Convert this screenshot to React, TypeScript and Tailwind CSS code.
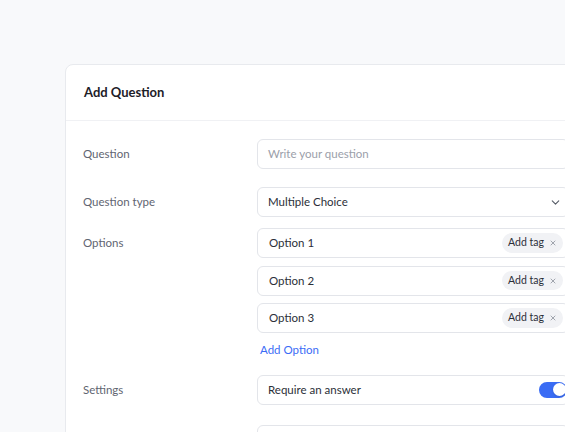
import { ChevronDown, X } from "lucide-react";

const font = { fontFamily: "Lato, 'Noto Sans', sans-serif" };

function OptionRow({ label }: { label: string }) {
  return (
    <div className="flex h-[30px] items-center justify-between rounded-md border border-[#e3e5ea] bg-white pl-[11px] pr-[5px]">
      <span className="text-[11.5px] text-[#2b2f38]">{label}</span>
      <span className="flex items-center gap-[5px] rounded-full bg-[#f1f2f5] px-[6px] py-[2px] text-[10.5px] text-[#2b2f38]">
        Add tag
        <X className="h-[8px] w-[8px] text-[#8b909a]" strokeWidth={2.4} />
      </span>
    </div>
  );
}

export default function App() {
  return (
    <div
      className="h-[432px] w-[565px] overflow-hidden bg-[#f8f9fb] pl-[65px] pt-[64px]"
      style={font}
    >
      <div className="w-[530px] rounded-lg border border-[#e8eaee] bg-white">
        <div className="flex h-[56px] items-center border-b border-[#f0f1f4] px-[18px]">
          <h2 className="text-[13px] font-bold text-[#1d2027]">Add Question</h2>
        </div>

        <div className="flex flex-col px-[17px] pt-[18px]">
          {/* Question */}
          <div className="flex items-center">
            <div className="w-[174px] text-[11.5px] text-[#5f6571]">Question</div>
            <div className="flex h-[30px] w-[312px] items-center rounded-md border border-[#e3e5ea] px-[10px] text-[11.5px] text-[#9ba0aa]">
              Write your question
            </div>
          </div>

          {/* Question type */}
          <div className="mt-[18px] flex items-center">
            <div className="w-[174px] text-[11.5px] text-[#5f6571]">Question type</div>
            <div className="flex h-[30px] w-[312px] items-center justify-between rounded-md border border-[#e3e5ea] pl-[10px] pr-[6px] text-[11.5px] text-[#2b2f38]">
              Multiple Choice
              <ChevronDown className="h-[13px] w-[13px] text-[#555b66]" strokeWidth={2} />
            </div>
          </div>

          {/* Options */}
          <div className="mt-[11px] flex items-start">
            <div className="flex h-[30px] w-[174px] items-center text-[11.5px] text-[#5f6571]">Options</div>
            <div className="flex w-[312px] flex-col gap-[7.5px]">
              <OptionRow label="Option 1" />
              <OptionRow label="Option 2" />
              <OptionRow label="Option 3" />
              <button className="self-start pl-[3px] text-[11.5px] text-[#3b6cf6]">Add Option</button>
            </div>
          </div>

          {/* Settings */}
          <div className="mt-[17px] flex items-center">
            <div className="w-[174px] text-[11.5px] text-[#5f6571]">Settings</div>
            <div className="flex h-[30px] w-[312px] items-center justify-between rounded-md border border-[#e3e5ea] pl-[10px] pr-[1px] text-[11.5px] text-[#2b2f38]">
              Require an answer
              <span className="flex h-[16px] w-[28px] items-center justify-end rounded-full bg-[#3a6cf4] p-[1.5px]">
                <span className="h-[13px] w-[13px] rounded-full bg-white shadow" />
              </span>
            </div>
          </div>

          <div className="mt-[20px] flex items-center">
            <div className="w-[174px]" />
            <div className="h-[30px] w-[312px] rounded-md border border-[#e3e5ea]" />
          </div>
        </div>
      </div>
    </div>
  );
}
